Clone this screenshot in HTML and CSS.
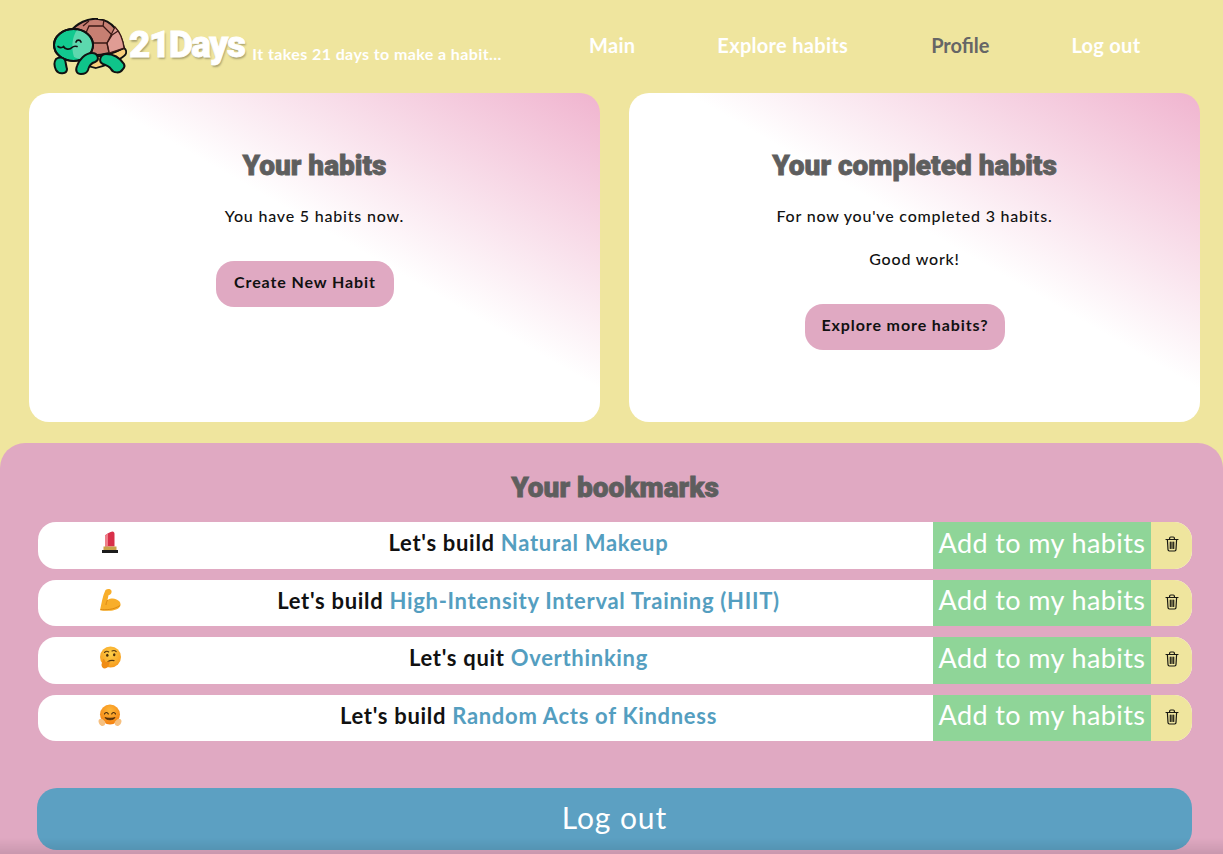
FILE: index.html
```html
<!DOCTYPE html>
<html lang="en">
<head>
    <meta charset="UTF-8">
    <title>21Days - Profile</title>
    <link rel="stylesheet" href="styles.css">
</head>
<body>

<svg class="sprites" width="0" height="0">
    <defs>
        <radialGradient id="face" cx="50%" cy="35%" r="65%">
            <stop offset="0" stop-color="#fdd04a"/>
            <stop offset="1" stop-color="#f79a1c"/>
        </radialGradient>
        <radialGradient id="hugface" cx="50%" cy="30%" r="70%">
            <stop offset="0" stop-color="#fdb83a"/>
            <stop offset="1" stop-color="#f5800f"/>
        </radialGradient>
    </defs>
    <symbol id="trash" viewBox="0 0 14 16">
        <path d="M1 3.500h12M4.600 3.300V2.200c0-.7.500-1.200 1.200-1.200h2.400c.7 0 1.200.5 1.200 1.200v1.100M2.400 3.600l.6 10c0 .8.600 1.400 1.400 1.400h5.200c.8 0 1.400-.6 1.400-1.400l.6-10M5.300 6v6.500M7 6v6.500M8.700 6v6.500" fill="none" stroke="#1a1a12" stroke-width="1.200" stroke-linecap="round"/>
    </symbol>
</svg>

<header class="topbar">
    <div class="brand">
        <svg class="logo" viewBox="0 0 74 58">
            <!-- belly -->
            <path d="M30 38c14 2 28-1 41-8 3 2 3 6 0 8-6 5-20 10-28 12l-8-2z" fill="#f9cf7c" stroke="#111" stroke-width="1.800"/>
            <!-- shell -->
            <path d="M17 14C24 5 35 0 45 1c14 1 23 14 26 29-11 5-24 8-36 7z" fill="#c77f72" stroke="#111" stroke-width="2"/>
            <path d="M62 9c5 5 8 13 9 21l-15 5-2-10z" fill="#e09c94" stroke="#3a1815" stroke-width="1.200"/>
            <path d="M30 8l6-5M51 1.500l-1 7M36 8h14l9 9-5 8H40l-8-8zM59 17l6-4M40 25l-3 11M54 25l2 9" fill="none" stroke="#3a1815" stroke-width="1.300"/>
            <!-- head -->
            <ellipse cx="20.500" cy="27" rx="19.500" ry="16" fill="#12c98f" stroke="#111" stroke-width="2"/>
            <path d="M24 12c8 1 14 7 15 14 .5 6-3 12-9 15-5 0-7-1-9-2-3-9-2-20 3-27z" fill="#5cd8ae"/>
            <ellipse cx="20.500" cy="27" rx="19.500" ry="16" fill="none" stroke="#111" stroke-width="2"/>
            <path d="M5 28.500c2 1.500 4 1.500 5.500 0M10.500 28.500c1.500 3 6 3.500 8.500 1 1-1 3-1.500 5-1M23 24c1-2.500 4-2.500 5 0" fill="none" stroke="#111" stroke-width="1.700" stroke-linecap="round"/>
            <!-- feet -->
            <path d="M3 41c3-2 7-2 9 1 1 3 1 6 2 9 0 5-8 6-11 1-2-4-2-8 0-11z" fill="#0fc48a" stroke="#111" stroke-width="2"/>
            <path d="M28 56c-4 0-6-3-4-8 2-6 8-13 15-13 6 0 8 7 3 9-4 1-6 4-7 8-1 3-4 4-7 4z" fill="#0fc48a" stroke="#111" stroke-width="2"/>
            <path d="M70 51c-3 5-10 4-12 0-2-3-5-4-8-5-5-2-3-10 3-10 8 0 14 4 18 10 1 2 0 4-1 5z" fill="#0fc48a" stroke="#111" stroke-width="2"/>
        </svg>
        <span class="brand-name">21Days</span>
        <span class="brand-tag">It takes 21 days to make a habit...</span>
    </div>
    <nav class="nav">
        <a class="nav-main">Main</a>
        <a class="nav-explore">Explore habits</a>
        <a class="nav-profile">Profile</a>
        <a class="nav-logout">Log out</a>
    </nav>
</header>

<section class="cards">
    <div class="card">
        <h2>Your habits</h2>
        <p>You have 5 habits now.</p>
        <button class="pill pill-create" type="button">Create New Habit</button>
    </div>
    <div class="card">
        <h2>Your completed habits</h2>
        <p>For now you've completed 3 habits.</p>
        <p>Good work!</p>
        <button class="pill pill-explore" type="button">Explore more habits?</button>
    </div>
</section>

<section class="bookmarks">
    <h2>Your bookmarks</h2>

    <div class="row">
        <div class="row-icon">
            <svg viewBox="0 0 24 24"><path d="M7 15.500V4.500c2-1.800 5-3.500 7.500-4 1.200 0 2 1 2 2.500v12.500z" fill="#d8304a"/><path d="M7 4.500c1-.9 2-1.600 3-2.200v13.200H7z" fill="#ee7f8a"/><rect x="5.500" y="15.500" width="13" height="3.500" fill="#c9a24a"/><rect x="4" y="19" width="16" height="3" fill="#1c1c1c"/></svg>
        </div>
        <div class="row-text">Let's build <span>Natural Makeup</span></div>
        <button class="row-add" type="button">Add to my habits</button>
        <button class="row-del" type="button"><svg><use href="#trash"/></svg></button>
    </div>

    <div class="row">
        <div class="row-icon">
            <svg viewBox="0 0 24 24"><path d="M7.500 1C9.500-.5 13-.3 13.500 2c.4 2-.8 3.800-3 4.200L9.500 11c2.500-1.500 6-1.800 8.500-.8 3 1 5 3.500 4.500 6-.5 3-4.500 5-9.500 5.500-4 .3-8 .2-11-.5C3.500 15 4.500 7 7.500 1z" fill="#f8ae2a"/><path d="M9.500 11c-1 2-1.500 3.500-1.500 5M2.500 20.500c5 .5 13 .5 19.500-4" fill="none" stroke="#dd8a12" stroke-width="1"/></svg>
        </div>
        <div class="row-text">Let's build <span>High-Intensity Interval Training (HIIT)</span></div>
        <button class="row-add" type="button">Add to my habits</button>
        <button class="row-del" type="button"><svg><use href="#trash"/></svg></button>
    </div>

    <div class="row">
        <div class="row-icon">
            <svg viewBox="0 0 24 24"><circle cx="12.500" cy="11" r="10.500" fill="url(#face)"/><path d="M6.500 6.500c1-1 3-1.500 4.200-.5M14 5c1.500-.8 3.200-.5 4.200.7" fill="none" stroke="#5a3a10" stroke-width="1.100" stroke-linecap="round"/><ellipse cx="9.300" cy="9.300" rx="1.200" ry="1.500" fill="#4a2f0c"/><ellipse cx="16.200" cy="8.800" rx="1.200" ry="1.500" fill="#4a2f0c"/><path d="M10 15.500c2-1 4-1.300 6-.8" fill="none" stroke="#5a3a10" stroke-width="1.200" stroke-linecap="round"/><path d="M5 13c1.500 0 2 1.500 2.500 3l3-.5c1.500 0 1.500 2 .5 2.500 0 2-1 4-4 4.500-2.500 0-3.500-2-3.500-4z" fill="#f08c14"/></svg>
        </div>
        <div class="row-text">Let's quit <span>Overthinking</span></div>
        <button class="row-add" type="button">Add to my habits</button>
        <button class="row-del" type="button"><svg><use href="#trash"/></svg></button>
    </div>

    <div class="row">
        <div class="row-icon">
            <svg viewBox="0 0 24 24"><circle cx="12" cy="10.500" r="10" fill="url(#hugface)"/><path d="M6.500 10c.8-2 3-2 3.800 0M13.700 10c.8-2 3-2 3.800 0" fill="none" stroke="#4a2a0a" stroke-width="1.200" stroke-linecap="round"/><path d="M7 13.500c1.500 3 8.500 3 10 0-1.500 1-8.500 1-10 0z" fill="#4a2a0a" stroke="#4a2a0a" stroke-width=".8"/><path d="M.5 17c0-2 3-3 4.500-1.500l2 2c1 1.500 0 4.500-2.500 4.500-2 0-4-2.500-4-5zM23.500 17c0-2-3-3-4.500-1.500l-2 2c-1 1.500 0 4.500 2.500 4.500 2 0 4-2.500 4-5z" fill="#f6c080"/></svg>
        </div>
        <div class="row-text">Let's build <span>Random Acts of Kindness</span></div>
        <button class="row-add" type="button">Add to my habits</button>
        <button class="row-del" type="button"><svg><use href="#trash"/></svg></button>
    </div>

    <button class="logout" type="button">Log out</button>
</section>

<div class="bottom-fade"></div>

</body>
</html>
```

FILE: styles.css
```css
body {
    font-family: "Lato", "Liberation Sans", sans-serif;
    background-color: #efe59e;
    margin: 0;
    color: #111;
}
button {
    font-family: inherit;
    border: none;
    cursor: pointer;
}
h2 {
    font-family: "Roboto", "Liberation Sans", sans-serif;
    font-weight: 900;
    color: #5e5e5e;
    margin: 0;
    font-size: 28px;
    line-height: 34px;
    -webkit-text-stroke: .8px #5e5e5e;
}
.sprites {
    position: absolute;
}
.topbar {
    display: flex;
    height: 93px;
    align-items: center;
    padding: 0 0 0 53px;
}
.brand {
    display: flex;
    align-items: center;
    width: 536px;
    height: 58px;
    margin-top: 1px;
}
.logo {
    width: 74px;
    height: 58px;
    flex: none;
}
.brand-name {
    font-family: "Roboto", "Liberation Sans", sans-serif;
    font-weight: 900;
    font-size: 37px;
    color: #fff;
    margin: -5px 0 0 2px;
    letter-spacing: -1.500px;
    -webkit-text-stroke: .8px #fff;
    text-shadow: 1px 2px 2px rgba(0, 0, 0, .3);
}
.brand-tag {
    font-size: 16px;
    font-weight: 700;
    color: #fff;
    letter-spacing: .4px;
    margin: 13px 0 0 8px;
    white-space: nowrap;
}
.nav {
    display: flex;
    margin-top: -3px;
    font-size: 20px;
    font-weight: 700;
    letter-spacing: .3px;
    color: #fff;
    white-space: nowrap;
}
.nav-explore {
    margin-left: 82px;
}
.nav-profile {
    margin-left: 83px;
    letter-spacing: 0;
    color: #666;
}
.nav-logout {
    margin-left: 82px;
}
.cards {
    display: flex;
    gap: 29px;
    padding: 0 23px 0 29px;
}
.card {
    flex: 1;
    height: 329px;
    box-sizing: border-box;
    padding-top: 56px;
    text-align: center;
    border-radius: 20px;
    background: linear-gradient(to bottom left, #f0b4cf 0%, #ffffff 45%);
}
.card p {
    margin: 0;
    font-size: 16px;
    font-weight: 500;
    line-height: 19px;
    letter-spacing: .8px;
}
.card h2 + p {
    margin-top: 23px;
}
.card p + p {
    margin-top: 24px;
}
.pill {
    display: block;
    height: 46px;
    margin-top: 36px;
    padding: 0 0 5px;
    border-radius: 18px;
    background-color: #e0a9c2;
    font-size: 16px;
    font-weight: 700;
    letter-spacing: .9px;
    color: #111;
}
.pill-create {
    width: 178px;
    margin-left: 187px;
}
.pill-explore {
    width: 200px;
    margin-left: 176px;
}
.bookmarks {
    margin-top: 21px;
    height: 411px;
    box-sizing: border-box;
    padding: 28px 31px 0 38px;
    background-color: #e0a9c2;
    border-radius: 25px 25px 0 0;
}
.bookmarks h2 {
    text-align: center;
    margin-bottom: 17px;
}
.row {
    display: flex;
    height: 46.500px;
    margin-bottom: 11px;
    border-radius: 18px;
    overflow: hidden;
    background-color: #fff;
}
.row-icon {
    width: 144px;
    flex: none;
    padding-top: 9px;
    text-align: center;
}
.row-icon svg {
    width: 24px;
    height: 24px;
}
.row-text {
    flex: 1;
    padding: 8px 58px 0 0;
    text-align: center;
    font-size: 22px;
    font-weight: 700;
    line-height: 26px;
    letter-spacing: .7px;
}
.row-text span {
    color: #549ec0;
}
.row-add {
    width: 218px;
    flex: none;
    background-color: #8fd598;
    color: #fff;
    font-size: 27px;
    letter-spacing: .4px;
    padding: 0 0 6px;
}
.row-del {
    width: 41px;
    flex: none;
    background-color: #efe59e;
    padding: 0;
}
.row-del svg {
    width: 14px;
    height: 16px;
    display: block;
    margin: -2px 0 0 14px;
}
.logout {
    display: block;
    width: 1155px;
    height: 62px;
    margin: 47px 0 0 -1px;
    padding: 0 0 5px;
    border-radius: 20px;
    background-color: #5ca0c2;
    color: #fff;
    font-size: 30px;
    letter-spacing: .9px;
}
.bottom-fade {
    position: fixed;
    left: 0;
    right: 0;
    bottom: 0;
    height: 16px;
    background: linear-gradient(to bottom, rgba(0, 0, 0, 0), rgba(0, 0, 0, .1));
}
```
